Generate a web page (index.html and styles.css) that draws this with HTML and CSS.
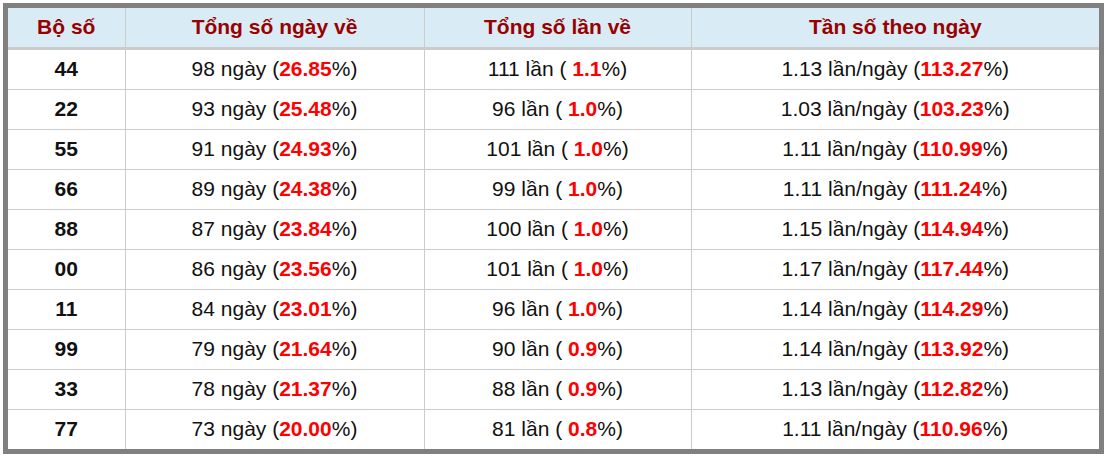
FILE: index.html
```html
<!DOCTYPE html>
<html lang="vi">
<head>
<meta charset="utf-8">
<link rel="stylesheet" href="styles.css">
</head>
<body>
<div class="frame">
<table class="stats">
<colgroup><col class="c1"><col class="c2"><col class="c3"><col class="c4"></colgroup>
<thead>
<tr><th>Bộ số</th><th>Tổng số ngày về</th><th>Tổng số lần về</th><th>Tần số theo ngày</th></tr>
</thead>
<tbody>
<tr><td class="num">44</td><td>98 ngày (<b>26.85</b>%)</td><td>111 lần ( <b>1.1</b>%)</td><td>1.13 lần/ngày (<b>113.27</b>%)</td></tr>
<tr><td class="num">22</td><td>93 ngày (<b>25.48</b>%)</td><td>96 lần ( <b>1.0</b>%)</td><td>1.03 lần/ngày (<b>103.23</b>%)</td></tr>
<tr><td class="num">55</td><td>91 ngày (<b>24.93</b>%)</td><td>101 lần ( <b>1.0</b>%)</td><td>1.11 lần/ngày (<b>110.99</b>%)</td></tr>
<tr><td class="num">66</td><td>89 ngày (<b>24.38</b>%)</td><td>99 lần ( <b>1.0</b>%)</td><td>1.11 lần/ngày (<b>111.24</b>%)</td></tr>
<tr><td class="num">88</td><td>87 ngày (<b>23.84</b>%)</td><td>100 lần ( <b>1.0</b>%)</td><td>1.15 lần/ngày (<b>114.94</b>%)</td></tr>
<tr><td class="num">00</td><td>86 ngày (<b>23.56</b>%)</td><td>101 lần ( <b>1.0</b>%)</td><td>1.17 lần/ngày (<b>117.44</b>%)</td></tr>
<tr><td class="num">11</td><td>84 ngày (<b>23.01</b>%)</td><td>96 lần ( <b>1.0</b>%)</td><td>1.14 lần/ngày (<b>114.29</b>%)</td></tr>
<tr><td class="num">99</td><td>79 ngày (<b>21.64</b>%)</td><td>90 lần ( <b>0.9</b>%)</td><td>1.14 lần/ngày (<b>113.92</b>%)</td></tr>
<tr><td class="num">33</td><td>78 ngày (<b>21.37</b>%)</td><td>88 lần ( <b>0.9</b>%)</td><td>1.13 lần/ngày (<b>112.82</b>%)</td></tr>
<tr><td class="num">77</td><td>73 ngày (<b>20.00</b>%)</td><td>81 lần ( <b>0.8</b>%)</td><td>1.11 lần/ngày (<b>110.96</b>%)</td></tr>
</tbody>
</table>
</div>
</body>
</html>
```
FILE: styles.css
```css
html, body {
  margin: 0;
  padding: 0;
  background: #fff;
}
body {
  padding: 3px;
  font-family: "Liberation Sans", Arial, sans-serif;
}
.frame {
  width: 1091px;
  border: 5px solid #808080;
  background: #fff;
}
.stats {
  width: 1091px;
  border-collapse: collapse;
  table-layout: fixed;
  font-size: 21px;
  color: #111;
}
.c1 { width: 117px; }
.c2 { width: 299px; }
.c3 { width: 267px; }
.c4 { width: 408px; }
.stats th {
  height: 37px;
  padding: 0 0 2px;
  background: #d9ecf5;
  color: #990000;
  font-weight: bold;
  text-align: center;
  border-left: 1px solid #ccc;
  border-bottom: 3px solid #ccc;
}
.stats td {
  height: 37px;
  padding: 0 0 2px;
  text-align: center;
  border-left: 1px solid #ccc;
  border-top: 1px solid #ccc;
}
.stats th:first-child, .stats td:first-child { border-left: none; }
.stats tbody tr:first-child td { border-top: none; }
.stats td.num { font-weight: bold; }
.stats b { color: #ff0000; font-weight: bold; }
```
